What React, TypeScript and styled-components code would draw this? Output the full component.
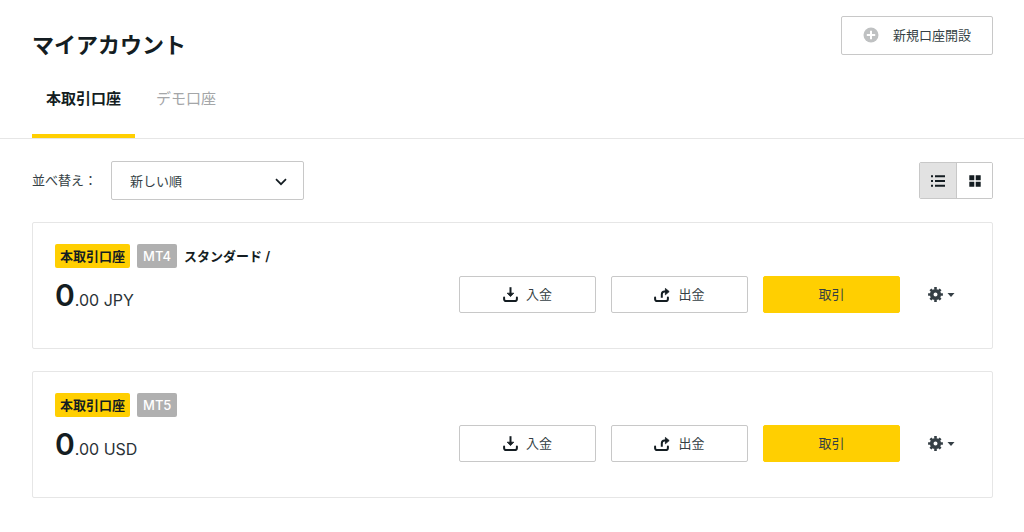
import React, { useState } from "react";
import styled, { createGlobalStyle } from "styled-components";

const GlobalStyle = createGlobalStyle`
  *, *::before, *::after { box-sizing: border-box; }
  body {
    margin: 0;
    background: #fff;
    color: #141d22;
    font-family: Inter, "Noto Sans CJK JP", sans-serif;
    font-size: 13px;
    line-height: 20px;
  }
  button, select { font: inherit; color: inherit; margin: 0; cursor: pointer; }
  svg { display: block; flex: none; }
`;

const Page = styled.div`
  padding-bottom: 32px;
`;

const Header = styled.header`
  display: flex;
  align-items: flex-start;
  justify-content: space-between;
  padding: 16px 31px 0 32px;
`;

const Title = styled.h1`
  margin: 0;
  padding-top: 13px;
  font-size: 22px;
  line-height: 32px;
  font-weight: 700;
`;

const OutlineButton = styled.button`
  display: flex;
  align-items: center;
  justify-content: center;
  background: #fff;
  border: 1px solid #c8c8c8;
  border-radius: 2px;
  color: #353f45;
`;

const NewAccountButton = styled(OutlineButton)`
  height: 39px;
  padding: 0 21px 2px;
  gap: 14px;
`;

const Tabs = styled.nav`
  display: flex;
  gap: 7px;
  margin-top: 19px;
  padding: 0 32px;
  border-bottom: 1px solid #e6e6e6;
`;

const Tab = styled.button<{ $active: boolean }>`
  height: 58px;
  padding: 0 14px 16px;
  border: 0;
  border-bottom: 4px solid ${(p) => (p.$active ? "#ffcf01" : "transparent")};
  background: none;
  color: ${(p) => (p.$active ? "#141d22" : "#a4a6a8")};
  font-size: 15px;
  line-height: 24px;
  font-weight: ${(p) => (p.$active ? 700 : 400)};
`;

const Content = styled.main`
  padding: 22px 31px 0 32px;
`;

const Toolbar = styled.div`
  display: flex;
  align-items: center;
  justify-content: space-between;
  margin-bottom: 22px;
`;

const SortField = styled.div`
  display: flex;
  align-items: center;
  gap: 14px;
  color: #353f45;
`;

const SortLabel = styled.label`
  padding-bottom: 2px;
`;

const SelectBox = styled.div`
  position: relative;
  width: 193px;
`;

const Select = styled.select`
  appearance: none;
  display: block;
  width: 100%;
  height: 39px;
  padding: 0 36px 0 18px;
  border: 1px solid #c8c8c8;
  border-radius: 2px;
  background: #fff;
`;

const SelectArrow = styled.svg`
  position: absolute;
  right: 17px;
  top: 17px;
  pointer-events: none;
`;

const ViewToggle = styled.div`
  display: flex;
  border: 1px solid #c8c8c8;
  border-radius: 2px;
  overflow: hidden;
`;

const ViewButton = styled.button<{ $active: boolean }>`
  display: flex;
  align-items: center;
  justify-content: center;
  width: 36px;
  height: 35px;
  padding: 0;
  border: 0;
  background: ${(p) => (p.$active ? "#e2e2e2" : "#fff")};

  & + & {
    border-left: 1px solid #c8c8c8;
  }
`;

const AccountList = styled.ul`
  display: grid;
  gap: 22px;
  margin: 0;
  padding: 0;
  list-style: none;
`;

const Card = styled.li`
  padding: 21px 37px 33px 22px;
  border: 1px solid #e6e6e6;
  border-radius: 2px;
`;

const CardHeading = styled.div`
  display: flex;
  align-items: center;
  gap: 7px;
  font-weight: 600;
`;

const Badge = styled.span<{ $platform?: boolean }>`
  padding: ${(p) => (p.$platform ? "2px 6px" : "2px 5px")};
  border-radius: 2px;
  background: ${(p) => (p.$platform ? "#b0b0b0" : "#ffcf01")};
  color: ${(p) => (p.$platform ? "#fff" : "#141d22")};
  font-weight: ${(p) => (p.$platform ? 500 : 700)};
`;

const CardBody = styled.div`
  display: flex;
  align-items: flex-start;
  justify-content: space-between;
  margin-top: 8px;
`;

const Balance = styled.div`
  display: flex;
  align-items: baseline;
`;

const BalanceWhole = styled.span`
  font-size: 30px;
  line-height: 39px;
  font-weight: 600;
`;

const BalanceRest = styled.span`
  font-size: 16px;
  line-height: 20px;
  color: #2a3237;
`;

const Actions = styled.div`
  display: flex;
  align-items: center;
  gap: 15px;
`;

const ActionButton = styled(OutlineButton)<{ $primary?: boolean }>`
  width: 137px;
  height: 37px;
  padding: 0 0 2px;
  gap: 8px;
  background: ${(p) => (p.$primary ? "#ffcf01" : "#fff")};
  border-color: ${(p) => (p.$primary ? "#ffcf01" : "#c8c8c8")};

  svg {
    margin-top: 2px;
  }
`;

const SettingsButton = styled.button`
  display: flex;
  align-items: center;
  gap: 4px;
  margin-left: 13px;
  padding: 0;
  border: 0;
  background: none;
  color: #353f45;
`;

const PlusIcon = () => (
  <svg width="16" height="16" viewBox="0 0 16 16" aria-hidden="true">
    <circle cx="8" cy="8" r="7.5" fill="#bfc1c2" />
    <path d="M8 3.8v8.4M3.8 8h8.4" stroke="#fff" strokeWidth="2" />
  </svg>
);

const ListIcon = () => (
  <svg width="14" height="12" viewBox="0 0 14 12" fill="#141d22" aria-hidden="true">
    <path d="M0 .3h2v2H0zM4 .3h10v2H4zM0 5h2v2H0zM4 5h10v2H4zM0 9.7h2v2H0zM4 9.7h10v2H4z" />
  </svg>
);

const GridIcon = () => (
  <svg width="12" height="12" viewBox="0 0 12 12" fill="#141d22" aria-hidden="true">
    <path d="M.3.3h5v5h-5zM6.7.3h5v5h-5zM.3 6.7h5v5h-5zM6.7 6.7h5v5h-5z" />
  </svg>
);

const TRAY = "M1.1 10.4v1.9a1.8 1.8 0 0 0 1.8 1.8h9.2a1.8 1.8 0 0 0 1.8-1.8v-1.9";

const DepositIcon = () => (
  <svg width="15" height="15" viewBox="0 0 15 15" fill="none" stroke="#141d22" strokeWidth="2" aria-hidden="true">
    <path d={TRAY} strokeLinecap="round" />
    <path d="M7.5.2V8" />
    <path d="M4.2 6.2h6.6L7.5 9.6z" fill="#141d22" strokeWidth=".8" strokeLinejoin="round" />
  </svg>
);

const WithdrawIcon = () => (
  <svg width="16" height="15" viewBox="0 0 16 15" fill="none" stroke="#141d22" strokeWidth="2" aria-hidden="true">
    <path d={TRAY} strokeLinecap="round" />
    <path d="M7.8 10.8V7.4a2.8 2.8 0 0 1 2.8-2.8H12" />
    <path d="M11.4 1.4v6.4l3.8-3.2z" fill="#141d22" strokeWidth=".8" strokeLinejoin="round" />
  </svg>
);

const GearIcon = () => (
  <svg width="15" height="15" viewBox="-7.5 -7.5 15 15" fill="none" stroke="currentColor" aria-hidden="true">
    <circle r="3.8" strokeWidth="3.6" />
    <path
      d="M0-5V-7.4M0 5V7.4M-5 0H-7.4M5 0H7.4M3.5-3.5L5.1-5.1M-3.5-3.5L-5.1-5.1M3.5 3.5L5.1 5.1M-3.5 3.5L-5.1 5.1"
      strokeWidth="2.6"
    />
  </svg>
);

const CaretIcon = () => (
  <svg width="8" height="4" viewBox="0 0 8 4" fill="currentColor" aria-hidden="true">
    <path d="M.5 0h7L4 4z" />
  </svg>
);

const tabs = ["本取引口座", "デモ口座"];

const accounts = [
  { platform: "MT4", name: "スタンダード /", currency: "JPY" },
  { platform: "MT5", name: "", currency: "USD" },
];

export default function App() {
  const [tab, setTab] = useState(0);
  const [view, setView] = useState("list");

  return (
    <Page>
      <GlobalStyle />
      <Header>
        <Title>マイアカウント</Title>
        <NewAccountButton type="button">
          <PlusIcon />
          新規口座開設
        </NewAccountButton>
      </Header>
      <Tabs>
        {tabs.map((label, i) => (
          <Tab key={label} type="button" $active={tab === i} onClick={() => setTab(i)}>
            {label}
          </Tab>
        ))}
      </Tabs>
      <Content>
        <Toolbar>
          <SortField>
            <SortLabel htmlFor="sort">並べ替え：</SortLabel>
            <SelectBox>
              <Select id="sort">
                <option>新しい順</option>
              </Select>
              <SelectArrow width="12" height="8" viewBox="0 0 12 8" fill="none" stroke="#141d22" strokeWidth="1.7" aria-hidden="true">
                <path d="M1 1.2l5 5 5-5" />
              </SelectArrow>
            </SelectBox>
          </SortField>
          <ViewToggle>
            <ViewButton type="button" aria-label="リスト" $active={view === "list"} onClick={() => setView("list")}>
              <ListIcon />
            </ViewButton>
            <ViewButton type="button" aria-label="グリッド" $active={view === "grid"} onClick={() => setView("grid")}>
              <GridIcon />
            </ViewButton>
          </ViewToggle>
        </Toolbar>
        <AccountList>
          {accounts.map((account) => (
            <Card key={account.platform}>
              <CardHeading>
                <Badge>本取引口座</Badge>
                <Badge $platform>{account.platform}</Badge>
                {account.name && <span>{account.name}</span>}
              </CardHeading>
              <CardBody>
                <Balance>
                  <BalanceWhole>0</BalanceWhole>
                  <BalanceRest>.00 {account.currency}</BalanceRest>
                </Balance>
                <Actions>
                  <ActionButton type="button">
                    <DepositIcon />
                    入金
                  </ActionButton>
                  <ActionButton type="button">
                    <WithdrawIcon />
                    出金
                  </ActionButton>
                  <ActionButton type="button" $primary>
                    取引
                  </ActionButton>
                  <SettingsButton type="button" aria-label="設定">
                    <GearIcon />
                    <CaretIcon />
                  </SettingsButton>
                </Actions>
              </CardBody>
            </Card>
          ))}
        </AccountList>
      </Content>
    </Page>
  );
}
